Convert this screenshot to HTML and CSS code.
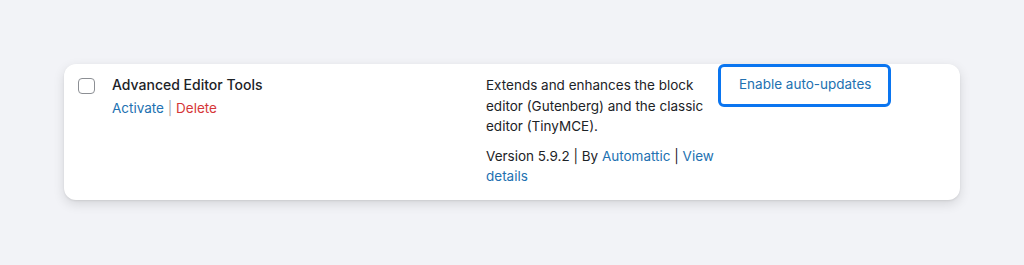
FILE: index.html
```html
<!DOCTYPE html>
<html lang="en">
<head>
    <meta charset="UTF-8">
    <meta name="viewport" content="width=device-width, initial-scale=1.0">
    <title>Plugins - Advanced Editor Tools</title>
    <link rel="stylesheet" href="styles.css">
</head>
<body>
    <div class="plugin-card">
        <div class="check-column">
            <input type="checkbox" class="plugin-check" aria-label="Select Advanced Editor Tools">
        </div>

        <div class="plugin-title">
            <strong>Advanced Editor Tools</strong>
            <div class="row-actions">
                <a href="#" class="activate">Activate</a>
                <span class="sep">|</span>
                <a href="#" class="delete">Delete</a>
            </div>
        </div>

        <div class="plugin-description">
            <p>Extends and enhances the block editor (Gutenberg) and the classic editor (TinyMCE).</p>
            <p class="plugin-meta">Version 5.9.2 | By <a href="#">Automattic</a> | <a href="#">View details</a></p>
        </div>

        <div class="auto-updates">
            <a href="#" class="toggle-auto-update">Enable auto-updates</a>
        </div>
    </div>
</body>
</html>
```

FILE: styles.css
```css
* {
    margin: 0;
    padding: 0;
    box-sizing: border-box;
}

body {
    background: #f2f3f7;
    padding: 64px;
    font-family: Inter, 'Noto Sans', sans-serif;
    font-size: 13.5px;
    line-height: 20px;
    color: #1d2327;
}

a {
    color: #2271b1;
    text-decoration: none;
}

.plugin-card {
    display: grid;
    grid-template-columns: 34px 374px 232px 1fr;
    height: 136px;
    padding-left: 14px;
    background: #fff;
    border-radius: 12px;
    box-shadow: 0 1px 2px rgba(0, 0, 0, 0.08), 0 4px 12px rgba(0, 0, 0, 0.12);
}

.check-column,
.plugin-title,
.plugin-description {
    padding-top: 11px;
}

.plugin-check {
    appearance: none;
    display: block;
    width: 17px;
    height: 16px;
    margin-top: 3px;
    border: 1.5px solid #8c8f94;
    border-radius: 4px;
    background: #fff;
}

.plugin-title strong {
    font-size: 14px;
    font-weight: 500;
}

.row-actions {
    margin-top: 3px;
}

.row-actions .sep {
    color: #a7aaad;
}

.row-actions .delete {
    color: #d63638;
}

.plugin-description p {
    margin-bottom: 9px;
    line-height: 20.5px;
}

.toggle-auto-update {
    display: inline-block;
    padding: 7px 17px 10px 18px;
    border: 3px solid #0a75f0;
    border-radius: 6px;
}
```
